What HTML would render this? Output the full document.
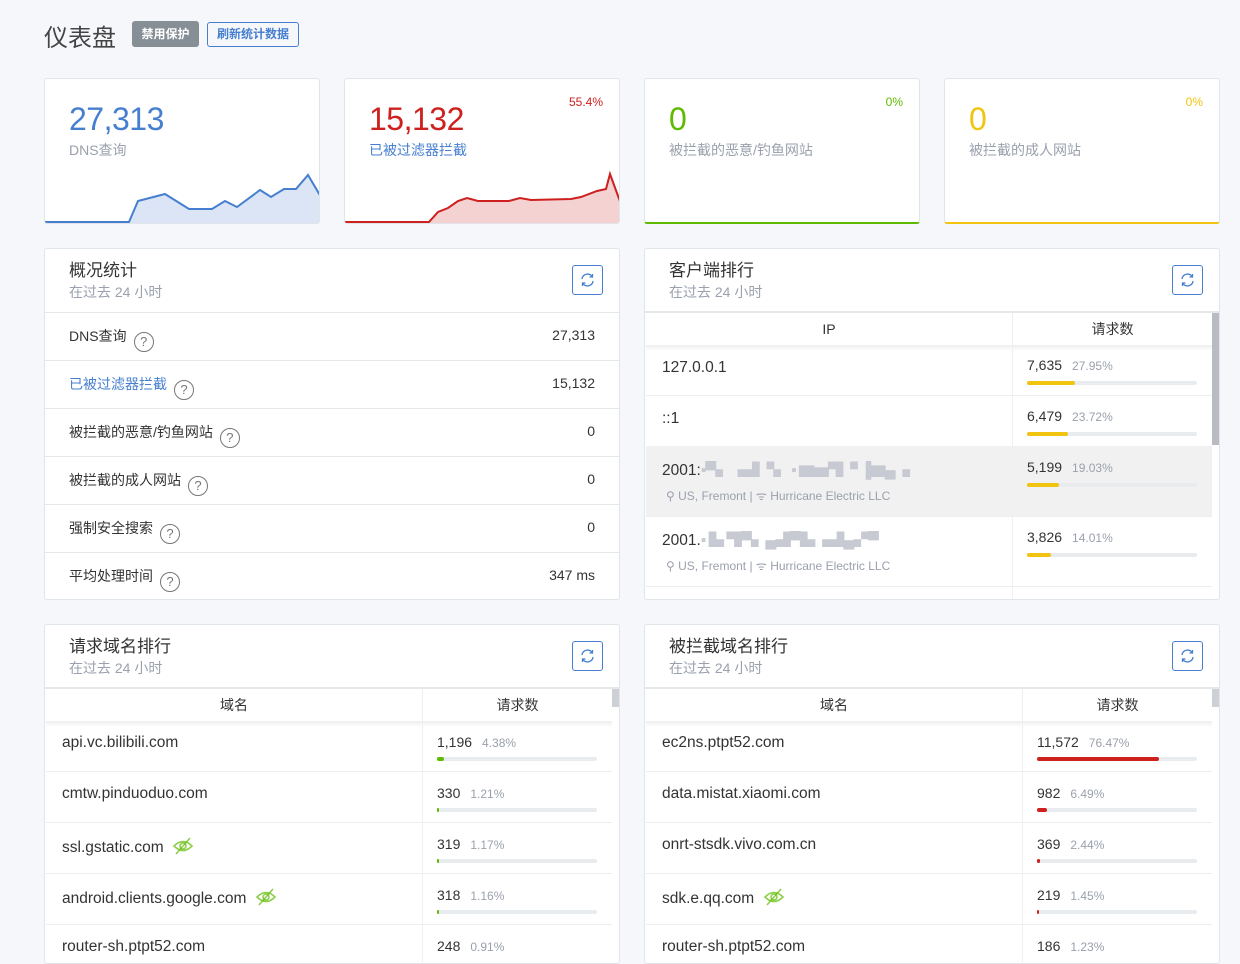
<!DOCTYPE html>
<html><head><meta charset="utf-8"><style>
*{box-sizing:border-box;margin:0;padding:0}
body{width:1240px;height:960px;overflow:hidden;background:#f5f7fb;font-family:"Liberation Sans","Noto Sans CJK SC",sans-serif;color:#495057;position:relative}
.a{position:absolute}
.card{position:absolute;background:#fff;border:1px solid #e0e5ec;border-radius:3px;overflow:hidden}
.big{position:absolute;left:24px;top:20px;font-size:32px;line-height:40px;letter-spacing:-0.5px}
.lbl{position:absolute;left:24px;top:61px;font-size:14px}
.pct{position:absolute;right:16px;top:16px;font-size:12px}
.ttl{position:absolute;left:24px;top:7px;font-size:17px;color:#333}
.sub{position:absolute;left:24px;top:33px;font-size:14px;color:#9aa0ac}
.rb{position:absolute;right:16px;top:16px;width:31px;height:30px;border:1px solid #467fcf;border-radius:3px}
.row{position:absolute;left:0;right:0;height:48px;border-top:1px solid #e6e8ec;font-size:14px;color:#333}
.row .l{position:absolute;left:24px;top:13px}
.row .r{position:absolute;right:24px;top:14px}
.q{display:inline-block;width:20px;height:20px;border:1.5px solid #777;border-radius:50%;font-size:13px;text-align:center;line-height:17px;color:#777;margin-left:7px;vertical-align:-5px}
.th{position:absolute;top:0;height:33px;font-size:14px;text-align:center;line-height:33px;color:#333}
.td{position:absolute;font-size:15.5px;color:#333}
.n{font-size:14px;color:#333}
.p{font-size:12px;color:#9aa0ac;margin-left:10px}
.bar{position:absolute;height:4px;background:#e9ecef;border-radius:2px}
.bar i{display:block;height:4px;border-radius:2px}
.sm{font-size:12px;color:#9aa0ac}
.blur{color:#c7cad2;letter-spacing:-1px}
</style></head><body>
<div class="a" style="left:44px;top:18px;font-size:24px;color:#444">仪表盘</div>
<div class="a" style="left:132px;top:21px;width:67px;height:26px;background:#868e96;border-radius:3px;color:#fff;font-size:12px;font-weight:bold;text-align:center;line-height:26px">禁用保护</div>
<div class="a" style="left:207px;top:22px;width:92px;height:25px;border:1px solid #467fcf;border-radius:3px;color:#467fcf;font-size:12px;font-weight:bold;text-align:center;line-height:23px">刷新统计数据</div>

<div class="card" style="left:44px;top:78px;width:276px;height:146px">
<div class="big" style="color:#467fcf">27,313</div><div class="lbl" style="color:#9aa0ac">DNS查询</div>
<svg class="a" style="left:0;top:0" width="276" height="146"><polygon fill="#dbe5f6" points="0,144 84,144 93,122 120,115 144,130 167,130 180,122 192,128 215,111 226,118 239,110 251,110 263,96 276,118 276,146 0,146"/><polyline fill="none" stroke="#467fcf" stroke-width="2" points="0,143 84,143 93,122 120,115 144,130 167,130 180,122 192,128 215,111 226,118 239,110 251,110 263,96 276,118"/></svg>
</div>
<div class="card" style="left:344px;top:78px;width:276px;height:146px">
<div class="big" style="color:#cd201f">15,132</div><div class="lbl" style="color:#467fcf">已被过滤器拦截</div><div class="pct" style="color:#cd201f">55.4%</div>
<svg class="a" style="left:0;top:0" width="276" height="146"><polygon fill="#f5d2d2" points="0,144 84,144 93,133 103,129 113,122 122,119 133,122 164,122 175,119 186,121 226,120 236,118 252,112 261,110 265,95 276,125 276,146 0,146"/><polyline fill="none" stroke="#cd201f" stroke-width="2" points="0,143 84,143 93,133 103,129 113,122 122,119 133,122 164,122 175,119 186,121 226,120 236,118 252,112 261,110 265,95 276,125"/></svg>
</div>
<div class="card" style="left:644px;top:78px;width:276px;height:146px;border-bottom:2px solid #5eba00">
<div class="big" style="color:#5eba00">0</div><div class="lbl" style="color:#9aa0ac">被拦截的恶意/钓鱼网站</div><div class="pct" style="color:#5eba00">0%</div></div>
<div class="card" style="left:944px;top:78px;width:276px;height:146px;border-bottom:2px solid #f1c40f">
<div class="big" style="color:#f1c40f">0</div><div class="lbl" style="color:#9aa0ac">被拦截的成人网站</div><div class="pct" style="color:#f1c40f">0%</div></div>

<div class="card" style="left:44px;top:248px;width:576px;height:352px">
<div class="ttl">概况统计</div><div class="sub">在过去 24 小时</div>
<div class="rb"><svg width="29" height="28"><path d="M9 13a5.5 5.5 0 0 1 10-2.5M20 15a5.5 5.5 0 0 1-10 2.5" fill="none" stroke="#467fcf" stroke-width="1.3"/><path d="M19.5 8v3h-3M9.5 20v-3h3" fill="none" stroke="#467fcf" stroke-width="1.3"/></svg></div>
<div class="row" style="top:63px"><span class="l">DNS查询<span class="q">?</span></span><span class="r">27,313</span></div>
<div class="row" style="top:111px"><span class="l" style="color:#467fcf">已被过滤器拦截<span class="q">?</span></span><span class="r">15,132</span></div>
<div class="row" style="top:159px"><span class="l">被拦截的恶意/钓鱼网站<span class="q">?</span></span><span class="r">0</span></div>
<div class="row" style="top:207px"><span class="l">被拦截的成人网站<span class="q">?</span></span><span class="r">0</span></div>
<div class="row" style="top:255px"><span class="l">强制安全搜索<span class="q">?</span></span><span class="r">0</span></div>
<div class="row" style="top:303px"><span class="l">平均处理时间<span class="q">?</span></span><span class="r">347 ms</span></div>
</div>

<div class="card" style="left:644px;top:248px;width:576px;height:352px">
<div class="ttl">客户端排行</div><div class="sub">在过去 24 小时</div>
<div class="rb"><svg width="29" height="28"><path d="M9 13a5.5 5.5 0 0 1 10-2.5M20 15a5.5 5.5 0 0 1-10 2.5" fill="none" stroke="#467fcf" stroke-width="1.3"/><path d="M19.5 8v3h-3M9.5 20v-3h3" fill="none" stroke="#467fcf" stroke-width="1.3"/></svg></div>
<div class="a" style="left:0;top:62px;width:576px;height:2px;background:#e6e8ec"></div>
<div class="a" style="left:1px;top:64px;width:566px;height:290px">
<div class="th" style="left:0;width:366px">IP</div><div class="th" style="left:366px;width:200px;border-left:1px solid #eee">请求数</div>
<div class="a" style="left:0;top:32px;width:566px;height:6px;background:linear-gradient(#eee,#fff0)"></div>
<div class="a" style="left:0;top:133px;width:566px;height:70px;background:#f1f1f1"></div>
<div class="a" style="left:366px;top:33px;width:1px;height:260px;background:#f0f0f0"></div>
<div class="a" style="left:0;top:82px;width:566px;height:1px;background:#eee"></div>
<div class="a" style="left:0;top:203px;width:566px;height:1px;background:#eee"></div>
<div class="a" style="left:0;top:273px;width:566px;height:1px;background:#eee"></div>
<div class="td" style="left:16px;top:46px">127.0.0.1</div>
<div class="td" style="left:16px;top:97px">::1</div>
<div class="td" style="left:16px;top:145px">2001:<span class="blur">▪▀▖▗▟▝▖ ▪ ▆▅▜▝ ▐▆▄▗</span></div>
<div class="sm a" style="left:20px;top:174px">⚲ US, Fremont | ᯤ Hurricane Electric LLC</div>
<div class="td" style="left:16px;top:215px">2001.<span class="blur">▪ ▙ ▜▀▖▄▟▀▙▗▟▄▞▀</span></div>
<div class="sm a" style="left:20px;top:244px">⚲ US, Fremont | ᯤ Hurricane Electric LLC</div>
<div class="a" style="left:381px;top:44px"><span class="n">7,635</span><span class="p">27.95%</span></div>
<div class="bar" style="left:381px;top:68px;width:170px"><i style="width:48px;background:#f1c40f"></i></div>
<div class="a" style="left:381px;top:95px"><span class="n">6,479</span><span class="p">23.72%</span></div>
<div class="bar" style="left:381px;top:119px;width:170px"><i style="width:41px;background:#f1c40f"></i></div>
<div class="a" style="left:381px;top:146px"><span class="n">5,199</span><span class="p">19.03%</span></div>
<div class="bar" style="left:381px;top:170px;width:170px"><i style="width:32px;background:#f1c40f"></i></div>
<div class="a" style="left:381px;top:216px"><span class="n">3,826</span><span class="p">14.01%</span></div>
<div class="bar" style="left:381px;top:240px;width:170px"><i style="width:24px;background:#f1c40f"></i></div>
</div>
<div class="a" style="left:567px;top:64px;width:7px;height:132px;background:#b8bcc2"></div>
</div>

<div class="card" style="left:44px;top:624px;width:576px;height:340px">
<div class="ttl">请求域名排行</div><div class="sub">在过去 24 小时</div>
<div class="rb"><svg width="29" height="28"><path d="M9 13a5.5 5.5 0 0 1 10-2.5M20 15a5.5 5.5 0 0 1-10 2.5" fill="none" stroke="#467fcf" stroke-width="1.3"/><path d="M19.5 8v3h-3M9.5 20v-3h3" fill="none" stroke="#467fcf" stroke-width="1.3"/></svg></div>
<div class="a" style="left:0;top:62px;width:576px;height:2px;background:#e6e8ec"></div>
<div class="a" style="left:1px;top:64px;width:566px;height:280px">
<div class="th" style="left:0;width:376px">域名</div><div class="th" style="left:376px;width:190px;border-left:1px solid #eee">请求数</div>
<div class="a" style="left:0;top:32px;width:566px;height:6px;background:linear-gradient(#eee,#fff0)"></div>
<div class="a" style="left:376px;top:33px;width:1px;height:250px;background:#f0f0f0"></div>
<div class="a" style="left:0;top:82px;width:566px;height:1px;background:#eee"></div>
<div class="a" style="left:0;top:133px;width:566px;height:1px;background:#eee"></div>
<div class="a" style="left:0;top:184px;width:566px;height:1px;background:#eee"></div>
<div class="a" style="left:0;top:235px;width:566px;height:1px;background:#eee"></div>
<div class="td" style="left:16px;top:45px">api.vc.bilibili.com</div>
<div class="td" style="left:16px;top:96px">cmtw.pinduoduo.com</div>
<div class="td" style="left:16px;top:147px">ssl.gstatic.com <svg width="22" height="20" style="vertical-align:-4px;margin-left:4px"><path d="M2 10q9-9 18 0q-9 9-18 0z" fill="none" stroke="#5eba00" stroke-opacity=".7" stroke-width="1.6"/><circle cx="11" cy="10" r="3" fill="none" stroke="#5eba00" stroke-opacity=".7" stroke-width="1.6"/><path d="M4 18L18 2" stroke="#5eba00" stroke-opacity=".7" stroke-width="1.6"/></svg></div>
<div class="td" style="left:16px;top:198px">android.clients.google.com <svg width="22" height="20" style="vertical-align:-4px;margin-left:4px"><path d="M2 10q9-9 18 0q-9 9-18 0z" fill="none" stroke="#5eba00" stroke-opacity=".7" stroke-width="1.6"/><circle cx="11" cy="10" r="3" fill="none" stroke="#5eba00" stroke-opacity=".7" stroke-width="1.6"/><path d="M4 18L18 2" stroke="#5eba00" stroke-opacity=".7" stroke-width="1.6"/></svg></div>
<div class="td" style="left:16px;top:249px">router-sh.ptpt52.com</div>
<div class="a" style="left:391px;top:45px"><span class="n">1,196</span><span class="p">4.38%</span></div>
<div class="bar" style="left:391px;top:68px;width:160px"><i style="width:7px;background:#5eba00"></i></div>
<div class="a" style="left:391px;top:96px"><span class="n">330</span><span class="p">1.21%</span></div>
<div class="bar" style="left:391px;top:119px;width:160px"><i style="width:2px;background:#5eba00"></i></div>
<div class="a" style="left:391px;top:147px"><span class="n">319</span><span class="p">1.17%</span></div>
<div class="bar" style="left:391px;top:170px;width:160px"><i style="width:2px;background:#5eba00"></i></div>
<div class="a" style="left:391px;top:198px"><span class="n">318</span><span class="p">1.16%</span></div>
<div class="bar" style="left:391px;top:221px;width:160px"><i style="width:2px;background:#5eba00"></i></div>
<div class="a" style="left:391px;top:249px"><span class="n">248</span><span class="p">0.91%</span></div>
</div>
<div class="a" style="left:567px;top:64px;width:7px;height:18px;background:#cdd0d4"></div>
</div>

<div class="card" style="left:644px;top:624px;width:576px;height:340px">
<div class="ttl">被拦截域名排行</div><div class="sub">在过去 24 小时</div>
<div class="rb"><svg width="29" height="28"><path d="M9 13a5.5 5.5 0 0 1 10-2.5M20 15a5.5 5.5 0 0 1-10 2.5" fill="none" stroke="#467fcf" stroke-width="1.3"/><path d="M19.5 8v3h-3M9.5 20v-3h3" fill="none" stroke="#467fcf" stroke-width="1.3"/></svg></div>
<div class="a" style="left:0;top:62px;width:576px;height:2px;background:#e6e8ec"></div>
<div class="a" style="left:1px;top:64px;width:566px;height:280px">
<div class="th" style="left:0;width:376px">域名</div><div class="th" style="left:376px;width:190px;border-left:1px solid #eee">请求数</div>
<div class="a" style="left:0;top:32px;width:566px;height:6px;background:linear-gradient(#eee,#fff0)"></div>
<div class="a" style="left:376px;top:33px;width:1px;height:250px;background:#f0f0f0"></div>
<div class="a" style="left:0;top:82px;width:566px;height:1px;background:#eee"></div>
<div class="a" style="left:0;top:133px;width:566px;height:1px;background:#eee"></div>
<div class="a" style="left:0;top:184px;width:566px;height:1px;background:#eee"></div>
<div class="a" style="left:0;top:235px;width:566px;height:1px;background:#eee"></div>
<div class="td" style="left:16px;top:45px">ec2ns.ptpt52.com</div>
<div class="td" style="left:16px;top:96px">data.mistat.xiaomi.com</div>
<div class="td" style="left:16px;top:147px">onrt-stsdk.vivo.com.cn</div>
<div class="td" style="left:16px;top:198px">sdk.e.qq.com <svg width="22" height="20" style="vertical-align:-4px;margin-left:4px"><path d="M2 10q9-9 18 0q-9 9-18 0z" fill="none" stroke="#5eba00" stroke-opacity=".7" stroke-width="1.6"/><circle cx="11" cy="10" r="3" fill="none" stroke="#5eba00" stroke-opacity=".7" stroke-width="1.6"/><path d="M4 18L18 2" stroke="#5eba00" stroke-opacity=".7" stroke-width="1.6"/></svg></div>
<div class="td" style="left:16px;top:249px">router-sh.ptpt52.com</div>
<div class="a" style="left:391px;top:45px"><span class="n">11,572</span><span class="p">76.47%</span></div>
<div class="bar" style="left:391px;top:68px;width:160px"><i style="width:122px;background:#cd201f"></i></div>
<div class="a" style="left:391px;top:96px"><span class="n">982</span><span class="p">6.49%</span></div>
<div class="bar" style="left:391px;top:119px;width:160px"><i style="width:10px;background:#cd201f"></i></div>
<div class="a" style="left:391px;top:147px"><span class="n">369</span><span class="p">2.44%</span></div>
<div class="bar" style="left:391px;top:170px;width:160px"><i style="width:3px;background:#cd201f"></i></div>
<div class="a" style="left:391px;top:198px"><span class="n">219</span><span class="p">1.45%</span></div>
<div class="bar" style="left:391px;top:221px;width:160px"><i style="width:2px;background:#cd201f"></i></div>
<div class="a" style="left:391px;top:249px"><span class="n">186</span><span class="p">1.23%</span></div>
</div>
<div class="a" style="left:567px;top:64px;width:7px;height:18px;background:#cdd0d4"></div>
</div>
</body></html>
